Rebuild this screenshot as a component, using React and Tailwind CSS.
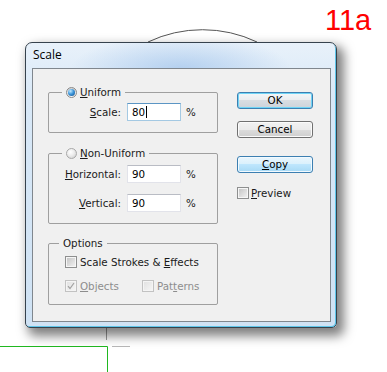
const ui = { fontFamily: '"DejaVu Sans", Tahoma, sans-serif' }

function Radio({ on }) {
  return on ? (
    <span className="flex h-[11px] w-[11px] items-center justify-center rounded-full border border-[#8a8a8a] bg-[linear-gradient(#d2d2d2,#f7f7f7)]">
      <span className="h-[7px] w-[7px] rounded-full bg-[radial-gradient(circle_at_35%_30%,#c4eaff_0%,#3f98dc_45%,#0b4a88_100%)]" />
    </span>
  ) : (
    <span className="h-[11px] w-[11px] rounded-full border border-[#a8a8a8] bg-[radial-gradient(circle_at_40%_35%,#ffffff_0%,#ececec_45%,#c9c9c9_100%)]" />
  )
}

function Check({ checked, disabled }) {
  return (
    <span
      className={`flex h-[12px] w-[12px] shrink-0 items-center justify-center border p-[1px] ${
        disabled ? 'border-[#c2c2c2] bg-[#f4f4f4]' : 'border-[#8e8f8f] bg-[#f6f6f6]'
      }`}
    >
      <span
        className={`relative h-full w-full ${
          disabled ? 'bg-[linear-gradient(135deg,#e2e2e2,#f4f4f4)]' : 'bg-[linear-gradient(135deg,#c6c6c6,#efefef)]'
        }`}
      >
        {checked && (
          <svg className="absolute inset-0" width="8" height="8" viewBox="0 0 8 8">
            <path d="M1 4.2 L3 6.5 L7 1" fill="none" stroke="#a2a2a2" strokeWidth="1.2" />
          </svg>
        )}
      </span>
    </span>
  )
}

function Field({ value, focused }) {
  return (
    <div
      className={`flex h-[18px] w-[54px] items-center border bg-white pl-[4px] text-black ${
        focused ? 'border-[#a4c9e3] border-t-[#5b95c4]' : 'border-[#e2e3ea] border-t-[#b9bcc4]'
      }`}
    >
      {value}
      {focused && <span className="ml-[1px] h-[12px] w-px bg-black" />}
    </div>
  )
}

function Row({ u, rest, value, focused }) {
  return (
    <div className="flex h-[18px] items-center">
      <span className="w-[72px] text-right">
        <span className="underline">{u}</span>
        {rest}
      </span>
      <span className="ml-[6px]">
        <Field value={value} focused={focused} />
      </span>
      <span className="ml-[5px]">%</span>
    </div>
  )
}

function Btn({ kind, children }) {
  const look = {
    ok: 'border-[#3c7fb1] bg-[linear-gradient(#f4f6f8_0%,#e9ecef_50%,#d9dde2_50%,#cdd3da_100%)] shadow-[inset_0_0_0_1px_#6fd4f6]',
    cancel: 'border-[#707070] bg-[linear-gradient(#f2f2f2_0%,#ebebeb_50%,#dddddd_50%,#cfcfcf_100%)] shadow-[inset_0_0_0_1px_#fbfbfb]',
    copy: 'border-[#3c7fb1] bg-[linear-gradient(#eaf6fd_0%,#d9f0fc_50%,#bee6fd_50%,#a7d9f5_100%)] shadow-[inset_0_0_0_1px_#f2faff]',
  }[kind]
  return (
    <div className={`flex h-[17px] w-[76px] items-center justify-center rounded-[3px] border text-black ${look}`}>
      {children}
    </div>
  )
}

function Backdrop() {
  return (
    <svg className="absolute inset-0" width="387" height="372" viewBox="0 0 387 372">
      <path d="M148 42 A127 127 0 0 1 257 42" fill="none" stroke="#555" strokeWidth="1" />
      <path d="M106.5 328 V340" stroke="#9a9a9a" strokeWidth="1" />
      <path d="M112 346.5 H130" stroke="#b8b8b8" strokeWidth="1" />
      <path d="M0 346.5 H107.5 V372" fill="none" stroke="#20b820" strokeWidth="1" />
    </svg>
  )
}

export default function App() {
  return (
    <div className="relative h-[372px] w-[387px] overflow-hidden bg-white">
      <Backdrop />
      <span
        className="absolute left-[325px] top-[6px] text-[29px] leading-[29px] text-[#ff0000]"
        style={{ fontFamily: '"Liberation Sans", Arial, sans-serif' }}
      >
        11a
      </span>

      <div className="relative pl-[25px] pt-[42px]">
        {/* Vista glass frame */}
        <div className="flex h-[286px] w-[312px] flex-col rounded-t-[7px] rounded-b-[5px] border border-[#36424d] bg-[radial-gradient(ellipse_110px_34px_at_50%_26px,rgba(160,195,235,0.7),transparent),linear-gradient(180deg,#e8f1fa_0%,#d8e8f7_20%,#cfe2f4_100%)] shadow-[inset_-1px_-1px_0_#5ec6ea,5px_6px_11px_2px_rgba(0,0,0,0.5)]">
          <div
            className="h-[25px] pl-[7px] pt-[4px] text-[12px] leading-[16px] text-black"
            style={{ fontFamily: '"Open Sans", "Noto Sans", sans-serif' }}
          >
            Scale
          </div>

          <div
            className="ml-[6px] mr-[5px] flex h-[254px] border border-[#80878e] bg-[#f0f0f0] text-[10.3px] leading-[13px] text-[#1a1a1a]"
            style={ui}
          >
            {/* left column */}
            <div className="ml-[15px] mt-[17px] flex w-[170px] flex-col">
              <fieldset className="rounded-[2px] border border-[#9f9f9f] px-0 pb-[11px]">
                <legend className="ml-[13px] px-[4px]">
                  <span className="flex h-[13px] items-center gap-[3px]">
                    <Radio on />
                    <span>
                      <span className="underline">U</span>niform
                    </span>
                  </span>
                </legend>
                <div className="pt-[4px]">
                  <Row u="S" rest="cale:" value="80" focused />
                </div>
              </fieldset>

              <fieldset className="mt-[14px] rounded-[2px] border border-[#9f9f9f] px-0 pb-[11px]">
                <legend className="ml-[13px] px-[4px]">
                  <span className="flex h-[13px] items-center gap-[3px]">
                    <Radio />
                    <span>
                      <span className="underline">N</span>on-Uniform
                    </span>
                  </span>
                </legend>
                <div className="flex flex-col gap-[11px] pt-[5px]">
                  <Row u="H" rest="orizontal:" value="90" />
                  <Row u="V" rest="ertical:" value="90" />
                </div>
              </fieldset>

              <fieldset className="mt-[13px] rounded-[2px] border border-[#9f9f9f] px-0 pb-[12px]">
                <legend className="ml-[10px] px-[4px]">
                  <span className="flex h-[13px] items-center">Options</span>
                </legend>
                <div className="flex flex-col gap-[12px] pl-[16px] pt-[6px]">
                  <div className="flex h-[12px] items-center">
                    <Check />
                    <span className="ml-[3px]">
                      Scale Strokes &amp; <span className="underline">E</span>ffects
                    </span>
                  </div>
                  <div className="flex h-[12px] items-center text-[#8d8d8d]">
                    <div className="flex w-[77px] items-center">
                      <Check checked disabled />
                      <span className="ml-[3px]">
                        <span className="underline">O</span>bjects
                      </span>
                    </div>
                    <Check disabled />
                    <span className="ml-[3px]">
                      Pat<span className="underline">t</span>erns
                    </span>
                  </div>
                </div>
              </fieldset>
            </div>

            {/* right column */}
            <div className="ml-[19px] mt-[23px] flex w-[76px] flex-col">
              <Btn kind="ok">OK</Btn>
              <div className="mt-[12px]">
                <Btn kind="cancel">Cancel</Btn>
              </div>
              <div className="mt-[18px]">
                <Btn kind="copy">
                  <span>
                    <span className="underline">C</span>opy
                  </span>
                </Btn>
              </div>
              <div className="mt-[14px] flex h-[12px] items-center">
                <Check />
                <span className="ml-[2px]">
                  <span className="underline">P</span>review
                </span>
              </div>
            </div>
          </div>
        </div>
      </div>
    </div>
  )
}
